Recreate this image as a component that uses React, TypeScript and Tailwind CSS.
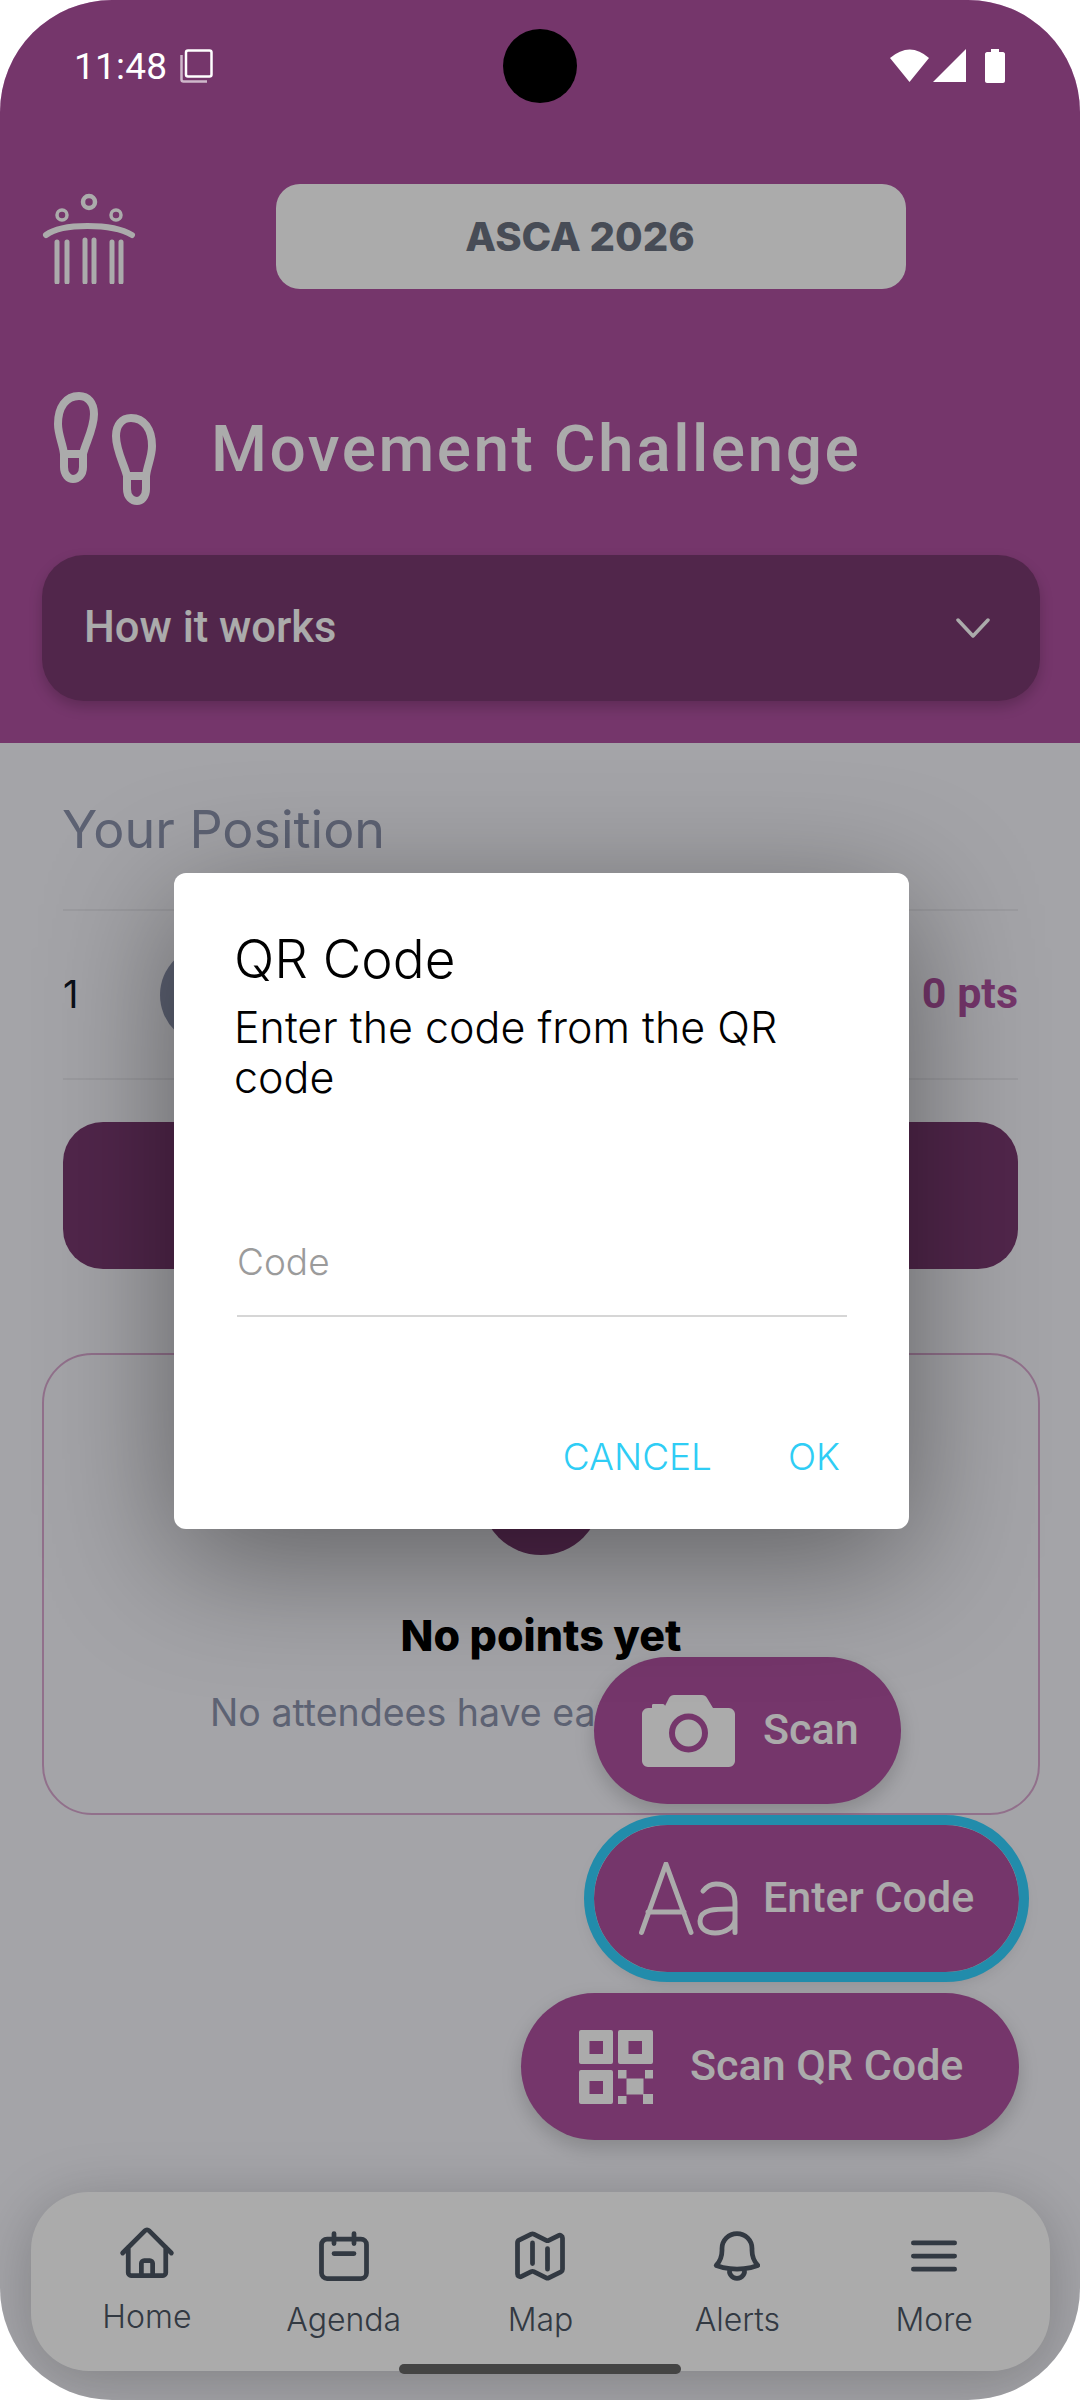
const heroPaths = {
  home: "m2.25 12 8.954-8.955c.44-.439 1.152-.439 1.591 0L21.75 12M4.5 9.75v10.125c0 .621.504 1.125 1.125 1.125H9.75v-4.875c0-.621.504-1.125 1.125-1.125h2.25c.621 0 1.125.504 1.125 1.125V21h4.125c.621 0 1.125-.504 1.125-1.125V9.75M8.25 21h8.25",
  agenda: "M8 3v4M16 3v4M5.25 5.25h13.5A2.25 2.25 0 0 1 21 7.5v11.25A2.25 2.25 0 0 1 18.75 21H5.25A2.25 2.25 0 0 1 3 18.75V7.5a2.25 2.25 0 0 1 2.25-2.25ZM8 11h8",
  map: "M9 6.75V15m6-6v8.25m.503 3.498 4.875-2.437c.381-.19.622-.58.622-1.006V4.82c0-.836-.88-1.38-1.628-1.006l-3.869 1.934c-.317.159-.69.159-1.006 0L9.503 3.252a1.125 1.125 0 0 0-1.006 0L3.622 5.689C3.24 5.88 3 6.27 3 6.695V19.18c0 .836.88 1.38 1.628 1.006l3.869-1.934c.317-.159.69-.159 1.006 0l4.994 2.497c.317.158.69.158 1.006 0Z",
  alerts: "M14.857 17.082a23.848 23.848 0 0 0 5.454-1.31A8.967 8.967 0 0 1 18 9.75V9A6 6 0 0 0 6 9v.75a8.967 8.967 0 0 1-2.312 6.022c1.733.64 3.56 1.085 5.455 1.31m5.714 0a24.255 24.255 0 0 1-5.714 0m5.714 0a3 3 0 1 1-5.714 0",
  more: "M3.75 6.75h16.5M3.75 12h16.5m-16.5 5.25h16.5",
};

const navItems = [
  { label: "Home", path: heroPaths.home, shift: "-mt-[3px]" },
  { label: "Agenda", path: heroPaths.agenda, shift: "" },
  { label: "Map", path: heroPaths.map, shift: "" },
  { label: "Alerts", path: heroPaths.alerts, shift: "" },
  { label: "More", path: heroPaths.more, shift: "" },
];

function Logo() {
  return (
    <svg width="94" height="94" viewBox="0 0 94 94" fill="none" className="shrink-0 text-white">
      <circle cx="47" cy="12" r="6" stroke="currentColor" strokeWidth="4.5" />
      <circle cx="20" cy="25" r="5" stroke="currentColor" strokeWidth="3.5" />
      <circle cx="74" cy="25" r="5" stroke="currentColor" strokeWidth="3.5" />
      <path d="M4 45C20 33 70 33 90 45" stroke="currentColor" strokeWidth="6" strokeLinecap="round" />
      <path d="M15 52V92M25 52V92M43 50V92M52 50V92M70 52V92M79 52V92" stroke="currentColor" strokeWidth="5" strokeLinecap="round" />
    </svg>
  );
}

function Feet() {
  const foot = "M25 5C12 5 4 16 4 33C4 44 9 53 10 63V76C10 84 15 88 19 88C24 88 29 84 29 76V63C31 53 40 38 40 23C40 12 34 5 25 5ZM10 63H29";
  return (
    <svg width="102" height="116" viewBox="0 0 102 116" fill="none" className="shrink-0 text-white">
      <path d={foot} stroke="currentColor" strokeWidth="8" />
      <path d={foot} stroke="currentColor" strokeWidth="8" transform="translate(102 22) scale(-1 1)" />
    </svg>
  );
}

function CameraIcon() {
  return (
    <svg width="93" height="72" viewBox="0 0 93 72" className="shrink-0 text-white">
      <path
        fill="currentColor"
        fillRule="evenodd"
        d="M6 13H10V10C10 9 11 9 12 9H21C22 9 23 10 23 11L27 3C28 1 30 0 32 0H60C62 0 64 1 65 3L71 13H87C90 13 93 16 93 19V66C93 69 90 72 87 72H6C3 72 0 69 0 66V19C0 16 3 13 6 13ZM46.5 18.5A19.5 19.5 0 1 0 46.5 57.5A19.5 19.5 0 1 0 46.5 18.5ZM46.5 24.5A13.5 13.5 0 1 1 46.5 51.5A13.5 13.5 0 1 1 46.5 24.5Z"
      />
    </svg>
  );
}

function LettersIcon() {
  return (
    <svg width="100" height="74" viewBox="0 0 100 74" fill="none" className="shrink-0 text-white">
      <path d="M2.5 70.5L27 2L52 70.5M9 50H45" stroke="currentColor" strokeWidth="5" strokeLinecap="round" strokeLinejoin="round" />
      <path d="M64 29C68 24 72 22 77 22C89 22 96 28 96 40V70.5M96 47C80 47 61 46 61 59C61 67 68 71 76 71C86 71 96 65 96 57" stroke="currentColor" strokeWidth="5" strokeLinecap="round" />
    </svg>
  );
}

function QrIcon() {
  return (
    <svg width="74" height="74" viewBox="0 0 74 74" className="shrink-0 text-white" fill="currentColor">
      <path fillRule="evenodd" d="M2 0H32Q34 0 34 2V32Q34 34 32 34H2Q0 34 0 32V2Q0 0 2 0ZM10.500 11V24H24V11Z" />
      <path fillRule="evenodd" d="M41 0H72Q74 0 74 2V32Q74 34 72 34H41Q39 34 39 32V2Q39 0 41 0ZM49.500 11V24H63V11Z" />
      <path fillRule="evenodd" d="M2 40H32Q34 40 34 42V72Q34 74 32 74H2Q0 74 0 72V42Q0 40 2 40ZM10.500 51V64H24V51Z" />
      <rect x="39" y="40" width="8.500" height="8.500" />
      <rect x="66" y="40" width="8" height="8.500" />
      <rect x="47.500" y="48.500" width="17" height="16" />
      <rect x="39" y="66" width="8.500" height="8" />
      <rect x="64" y="64" width="10" height="10" />
    </svg>
  );
}

function StatusBar() {
  return (
    <div className="absolute left-0 top-0 flex h-[132px] w-full items-center justify-between pl-[74px] pr-[75px] text-white">
      <div className="flex items-center gap-[13px]">
        <span className="font-['Roboto',sans-serif] text-[37px] leading-none tracking-[0.2px]">11:48</span>
        <svg width="33" height="34" viewBox="0 0 33 34" fill="none">
          <rect x="6" y="1.500" width="25.500" height="26" rx="2" stroke="white" strokeWidth="2.500" />
          <path d="M1.500 6V30.500C1.500 31.500 2 32.500 3.500 32.500H27" stroke="white" strokeOpacity="0.65" strokeWidth="2.500" />
        </svg>
      </div>
      <div className="flex items-center">
        <svg width="40" height="34" viewBox="0 0 40 34" fill="white">
          <path d="M0 9Q20 -8 39 9L19.500 33Z" />
        </svg>
        <svg width="33" height="34" viewBox="0 0 33 34" fill="white" className="ml-[3px]">
          <path d="M33 0V33H0Z" />
        </svg>
        <svg width="20" height="34" viewBox="0 0 20 34" fill="white" className="ml-[19px]">
          <path d="M6 0H14V3H18C19 3 20 4 20 5V32C20 33 19 34 18 34H2C1 34 0 33 0 32V5C0 4 1 3 2 3H6Z" />
        </svg>
      </div>
    </div>
  );
}

function FabStack() {
  const pill = "flex h-[147px] items-center rounded-full bg-[#af51a0] text-white font-['Roboto',sans-serif] text-[43px] font-medium leading-[50px] shadow-[0_8px_20px_rgba(0,0,0,0.18)]";
  return (
    <div className="absolute left-[521px] top-[1657px] flex w-[498px] flex-col items-end">
      <button className={`${pill} mr-[118px] w-[307px] pl-[48px]`}>
        <CameraIcon />
        <span className="ml-[28px] -mt-[4px]">Scan</span>
      </button>
      <button className={`${pill} mt-[21px] w-[425px] pl-[45px] outline-[10px] outline-[#33d1ff]`}>
        <LettersIcon />
        <span className="ml-[24px] -mt-[4px]">Enter Code</span>
      </button>
      <button className={`${pill} mt-[21px] w-[498px] pl-[58px]`}>
        <QrIcon />
        <span className="ml-[37px] -mt-[4px]">Scan QR Code</span>
      </button>
    </div>
  );
}

function BottomNav() {
  return (
    <nav className="absolute left-[31px] top-[2192px] grid h-[179px] w-[1019px] grid-cols-5 rounded-[58px] bg-white px-[17.500px] shadow-[0_10px_60px_rgba(0,0,0,0.22)]">
      {navItems.map((item) => (
        <div key={item.label} className={`flex flex-col items-center pt-[34px] text-[#4b5563] ${item.shift}`}>
          <svg width="60" height="60" viewBox="0 0 24 24" fill="none" stroke="currentColor" strokeWidth="1.900" strokeLinecap="round" strokeLinejoin="round">
            <path d={item.path} />
          </svg>
          <span className="mt-[14px] text-[32px] font-light leading-[40px]">{item.label}</span>
        </div>
      ))}
    </nav>
  );
}

function QrDialog() {
  return (
    <div className="absolute inset-0 flex items-center justify-center bg-black/33">
      <div className="ml-[3px] mt-[2px] flex h-[656px] w-[735px] flex-col rounded-[12px] bg-white pl-[60px] pr-[62px] pt-[56px] text-black shadow-[0_30px_130px_rgba(0,0,0,0.42)]">
        <h2 className="text-[53px] font-light leading-[60px]">QR Code</h2>
        <p className="mt-[13px] text-[43px] font-light leading-[50px]">Enter the code from the QR code</p>
        <div className="ml-[3px] mt-[138px] border-b-2 border-[#d6d6d6] pb-[31px] text-[37px] font-light leading-[44px] text-[#9b9b9b]">Code</div>
        <div className="mt-[118px] flex justify-end gap-[76px] pr-[7px] text-[37px] font-light leading-[44px] text-[#2fcdf5]">
          <span>CANCEL</span>
          <span>OK</span>
        </div>
      </div>
    </div>
  );
}

export default function App() {
  return (
    <div className="h-[2400px] w-[1080px] bg-white font-['Inter',sans-serif]">
      <div className="relative h-full overflow-hidden rounded-[112px] bg-[#f5f5fb]">
        <header className="h-[743px] bg-[#af51a0] pt-[184px]">
          <div className="flex items-center pl-[42px]">
            <Logo />
            <div className="ml-[140px] flex h-[105px] w-[630px] items-center justify-center rounded-[24px] bg-white pr-[22px] text-[40px] font-extrabold text-[#6b7280]">ASCA 2026</div>
          </div>
          <div className="mt-[102px] flex items-center pl-[54px]">
            <Feet />
            <h1 className="ml-[55px] font-['Roboto',sans-serif] text-[64px] font-medium leading-[75px] tracking-[2.500px] text-white">Movement Challenge</h1>
          </div>
          <div className="ml-[42px] mr-[40px] mt-[48px] flex h-[146px] items-center justify-between rounded-[42px] bg-[#7a3970] pl-[42px] pr-[50px] text-white shadow-[0_6px_14px_rgba(0,0,0,0.2)]">
            <span className="font-['Roboto',sans-serif] text-[43.500px] font-medium">How it works</span>
            <svg width="34" height="20" viewBox="0 0 34 20" fill="none" stroke="currentColor" strokeWidth="3.500" strokeLinecap="round" strokeLinejoin="round">
              <path d="M2 2L17 18L32 2" />
            </svg>
          </div>
        </header>

        <main className="pl-[63px] pr-[62px] pt-[57px]">
          <h2 className="-ml-[1px] text-[52px] leading-[60px] text-[#8b92ac]">Your Position</h2>
          <div className="mt-[49px] flex h-[171px] items-center border-y-2 border-[#e8e8ee]">
            <span className="w-[97px] text-[38px] text-[#111827]">1</span>
            <div className="h-[100px] w-[100px] rounded-full bg-[#8b92ac]" />
            <span className="ml-auto -mt-[2px] font-['Roboto',sans-serif] text-[43px] font-bold text-[#af51a0]">0 pts</span>
          </div>
          <div className="mt-[42px] h-[147px] rounded-[40px] bg-[#7a3970]" />
        </main>

        <section className="ml-[42px] mr-[40px] mt-[84px] flex h-[462px] flex-col items-center rounded-[50px] border-2 border-[#d9a8d0] pt-[80px]">
          <div className="h-[120px] w-[120px] rounded-full bg-[#7a3970]" />
          <h3 className="mt-[56px] text-[43px] font-extrabold leading-[48px] text-black">No points yet</h3>
          <p className="mt-[32px] text-[37.500px] leading-[44px] text-[#8b92ac]">No attendees have earned points yet.</p>
        </section>

        <FabStack />
        <BottomNav />
        <QrDialog />
        <div className="absolute left-[399px] top-[2364px] h-[10px] w-[282px] rounded-full bg-[#444444]" />
        <StatusBar />
        <div className="absolute left-[503px] top-[29px] h-[74px] w-[74px] rounded-full bg-black" />
      </div>
    </div>
  );
}
